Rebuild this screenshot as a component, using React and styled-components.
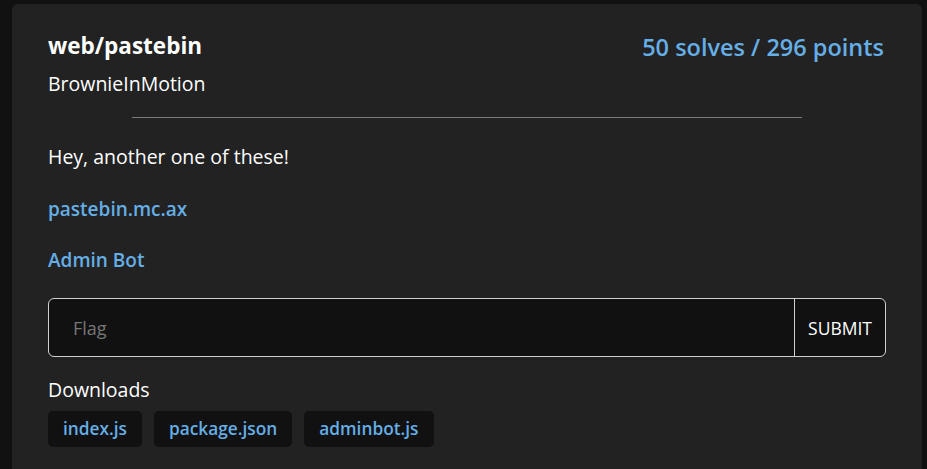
import React from 'react'
import styled, { createGlobalStyle } from 'styled-components'

const Global = createGlobalStyle`
  html, body { margin: 0; padding: 0; background: #111111; }
  body { font-family: "Open Sans", "Noto Sans", sans-serif; color: #fff; }
`

const Page = styled.div`
  padding: 4px 5px 0 12px;
  height: 469px;
  box-sizing: border-box;
`

const Card = styled.div`
  background: #222222;
  border-radius: 6px 6px 0 0;
  padding: 30px 36px 30px 36px;
  height: 100%;
  box-sizing: border-box;
`

const Header = styled.div`
  display: flex;
  justify-content: space-between;
  align-items: flex-start;
`

const Title = styled.h2`
  margin: -3px 0 0;
  font-size: 22.5px;
  font-weight: 700;
  line-height: 30px;
`

const Author = styled.div`
  margin-top: 9px;
  font-size: 19.5px;
  line-height: 28px;
`

const Score = styled.div`
  font-size: 23.5px;
  line-height: 30px;
  font-weight: 600;
  color: #65aee6;
  margin-top: -2px;
  margin-right: 2px;
`

const Divider = styled.hr`
  width: 80%;
  margin: 19px auto 25px;
  border: none;
  border-top: 1px solid #7a7a7a;
`

const Text = styled.p`
  margin: 0 0 ${p => p.gap ?? 24}px;
  font-size: 19.5px;
  line-height: 28px;
`

const Link = styled.a`
  display: block;
  margin: 0 0 ${p => p.gap ?? 23}px;
  font-size: 19px;
  line-height: 28px;
  font-weight: 600;
  color: #65aee6;
  text-decoration: none;
`

const Form = styled.form`
  display: flex;
  height: 59px;
  border: 1px solid #d0d0d0;
  border-radius: 6px;
  background: #111111;
  overflow: hidden;
  box-sizing: border-box;
`

const Input = styled.input`
  flex: 1;
  background: transparent;
  border: none;
  outline: none;
  padding: 0 24px;
  font-family: inherit;
  font-size: 18px;
  color: #fff;
  &::placeholder { color: #777; }
`

const Button = styled.button`
  width: 91px;
  padding: 0;
  border: none;
  border-left: 1px solid #d0d0d0;
  background: transparent;
  color: #fff;
  font-family: inherit;
  font-size: 17.5px;
`

const Label = styled.div`
  margin-top: 19px;
  font-size: 19.5px;
  line-height: 28px;
`

const Files = styled.div`
  display: flex;
  gap: 12px;
  margin-top: 7px;
`

const File = styled.a`
  padding: 0 15px;
  height: 36px;
  line-height: 36px;
  border-radius: 5px;
  background: #111111;
  color: #65aee6;
  font-size: 17.3px;
  font-weight: 600;
  text-decoration: none;
`

const App = () => (
  <Page>
    <Global />
    <Card>
      <Header>
        <div>
          <Title>web/pastebin</Title>
          <Author>BrownieInMotion</Author>
        </div>
        <Score>50 solves / 296 points</Score>
      </Header>
      <Divider />
      <Text>Hey, another one of these!</Text>
      <Link href="#">pastebin.mc.ax</Link>
      <Link href="#" gap={24}>Admin Bot</Link>
      <Form onSubmit={e => e.preventDefault()}>
        <Input placeholder="Flag" />
        <Button>SUBMIT</Button>
      </Form>
      <Label>Downloads</Label>
      <Files>
        <File href="#">index.js</File>
        <File href="#">package.json</File>
        <File href="#">adminbot.js</File>
      </Files>
    </Card>
  </Page>
)

export default App
